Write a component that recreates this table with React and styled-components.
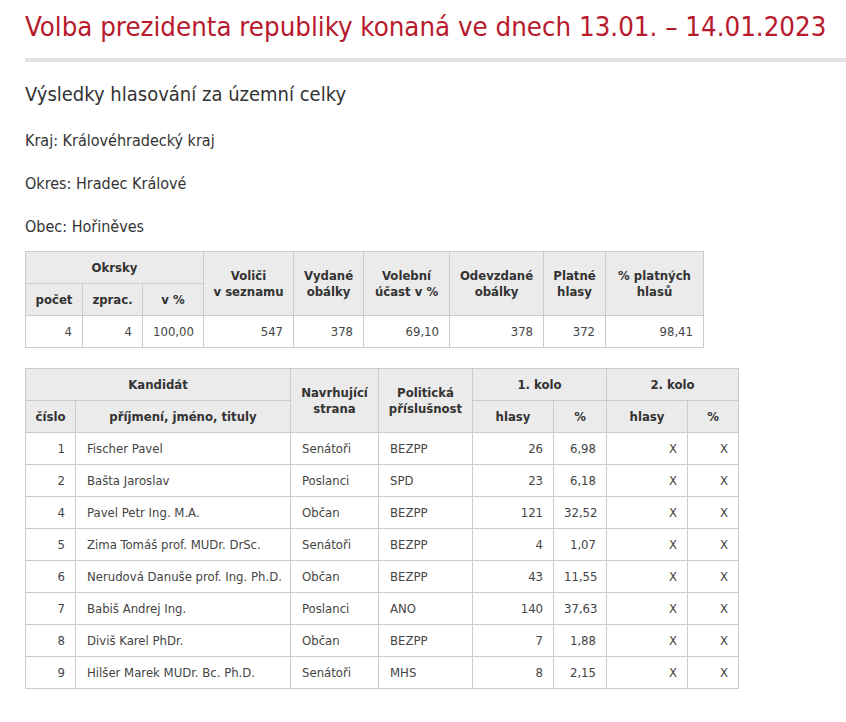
import React from "react";
import styled, { createGlobalStyle } from "styled-components";

const GlobalStyle = createGlobalStyle`
  body {
    margin: 0;
    background: #fff;
    font-family: "DejaVu Sans Condensed", "DejaVu Sans", "Liberation Sans", sans-serif;
    font-stretch: condensed;
    color: #333;
  }
`;

const Page = styled.div`
  padding: 0 0 30px 25px;
  overflow: hidden;
`;

const Title = styled.h1`
  margin: 0;
  padding-top: 9px;
  font-size: 27.4px;
  line-height: 36px;
  font-weight: normal;
  color: #b81a2d;
  white-space: nowrap;
`;

const Divider = styled.div`
  height: 4px;
  margin-top: 13px;
  background: #e2e2e2;
  width: calc(100% + 25px);
`;

const Subtitle = styled.h2`
  margin: 18px 0 0;
  font-size: 20px;
  line-height: 28px;
  font-weight: normal;
  color: #333;
`;

const InfoLine = styled.p`
  margin: ${(p) => (p.$first ? "21px" : "19px")} 0 0;
  font-size: 16px;
  line-height: 24px;
  color: #333;
`;

const Table = styled.table`
  border-collapse: collapse;
  table-layout: fixed;
  margin-top: ${(p) => p.$top || "0"};
  font-size: 13px;
`;

const Th = styled.th`
  background: #ebebeb;
  border: 1px solid #cccccc;
  height: 31px;
  padding: 0 4px;
  font-weight: bold;
  color: #333;
  text-align: center;
  line-height: 16px;
`;

const Td = styled.td`
  border: 1px solid #cccccc;
  height: 31px;
  padding: ${(p) => (p.$left ? "0 10px 0 11px" : "0 10px")};
  text-align: ${(p) => (p.$left ? "left" : "right")};
  color: #444;
  white-space: nowrap;
`;

const summaryCols = [57, 60, 61, 90, 70, 86, 94, 62, 98];
const summary = ["4", "4", "100,00", "547", "378", "69,10", "378", "372", "98,41"];

const candCols = [50, 215, 88, 94, 81, 53, 81, 51];
const candidates = [
  ["1", "Fischer Pavel", "Senátoři", "BEZPP", "26", "6,98"],
  ["2", "Bašta Jaroslav", "Poslanci", "SPD", "23", "6,18"],
  ["4", "Pavel Petr Ing. M.A.", "Občan", "BEZPP", "121", "32,52"],
  ["5", "Zima Tomáš prof. MUDr. DrSc.", "Senátoři", "BEZPP", "4", "1,07"],
  ["6", "Nerudová Danuše prof. Ing. Ph.D.", "Občan", "BEZPP", "43", "11,55"],
  ["7", "Babiš Andrej Ing.", "Poslanci", "ANO", "140", "37,63"],
  ["8", "Diviš Karel PhDr.", "Občan", "BEZPP", "7", "1,88"],
  ["9", "Hilšer Marek MUDr. Bc. Ph.D.", "Senátoři", "MHS", "8", "2,15"],
];

const Colgroup = ({ widths }) => (
  <colgroup>
    {widths.map((w, i) => (
      <col key={i} style={{ width: w }} />
    ))}
  </colgroup>
);

const App = () => {
  return (
    <Page>
      <GlobalStyle />
      <Title>Volba prezidenta republiky konaná ve dnech 13.01. – 14.01.2023</Title>
      <Divider />
      <Subtitle>Výsledky hlasování za územní celky</Subtitle>
      <InfoLine $first>Kraj: Královéhradecký kraj</InfoLine>
      <InfoLine>Okres: Hradec Králové</InfoLine>
      <InfoLine>Obec: Hořiněves</InfoLine>

      <Table $top="12px" style={{ width: 678 }}>
        <Colgroup widths={summaryCols} />
        <thead>
          <tr>
            <Th colSpan={3}>Okrsky</Th>
            <Th rowSpan={2}>Voliči<br />v seznamu</Th>
            <Th rowSpan={2}>Vydané<br />obálky</Th>
            <Th rowSpan={2}>Volební<br />účast v %</Th>
            <Th rowSpan={2}>Odevzdané<br />obálky</Th>
            <Th rowSpan={2}>Platné<br />hlasy</Th>
            <Th rowSpan={2}>% platných<br />hlasů</Th>
          </tr>
          <tr>
            <Th>počet</Th>
            <Th>zprac.</Th>
            <Th>v %</Th>
          </tr>
        </thead>
        <tbody>
          <tr>
            {summary.map((v, i) => (
              <Td key={i}>{v}</Td>
            ))}
          </tr>
        </tbody>
      </Table>

      <Table $top="20px" style={{ width: 713 }}>
        <Colgroup widths={candCols} />
        <thead>
          <tr>
            <Th colSpan={2}>Kandidát</Th>
            <Th rowSpan={2}>Navrhující<br />strana</Th>
            <Th rowSpan={2}>Politická<br />příslušnost</Th>
            <Th colSpan={2}>1. kolo</Th>
            <Th colSpan={2}>2. kolo</Th>
          </tr>
          <tr>
            <Th>číslo</Th>
            <Th>příjmení, jméno, tituly</Th>
            <Th>hlasy</Th>
            <Th>%</Th>
            <Th>hlasy</Th>
            <Th>%</Th>
          </tr>
        </thead>
        <tbody>
          {candidates.map((c) => (
            <tr key={c[0]}>
              <Td>{c[0]}</Td>
              <Td $left>{c[1]}</Td>
              <Td $left>{c[2]}</Td>
              <Td $left>{c[3]}</Td>
              <Td>{c[4]}</Td>
              <Td>{c[5]}</Td>
              <Td>X</Td>
              <Td>X</Td>
            </tr>
          ))}
        </tbody>
      </Table>
    </Page>
  );
};

export default App;
